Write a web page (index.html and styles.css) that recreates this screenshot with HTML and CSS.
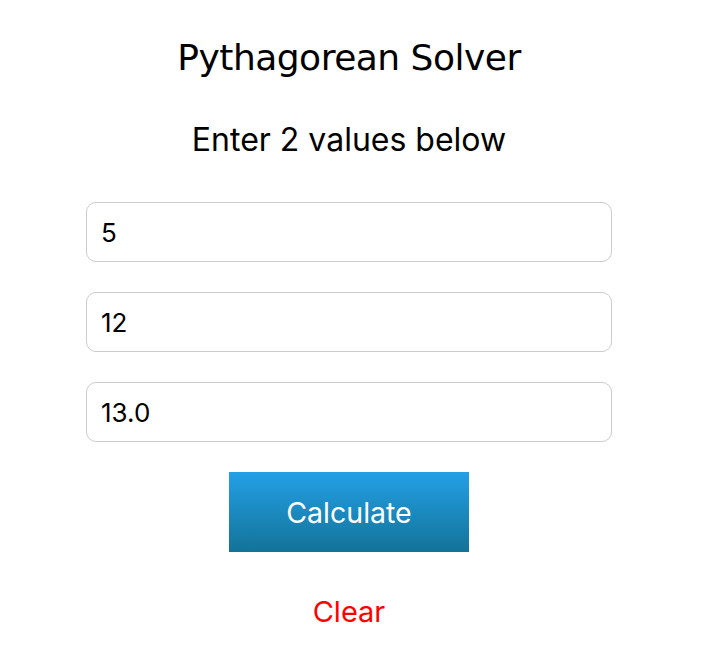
FILE: index.html
```html
<!DOCTYPE html>
<html>
<head>
<meta charset="utf-8">
<link rel="stylesheet" href="styles.css">
</head>
<body>
<main class="app">
  <h1 class="title">Pythagorean Solver</h1>
  <p class="subtitle">Enter 2 values below</p>
  <form class="form">
    <input class="field" type="text" value="5">
    <input class="field" type="text" value="12">
    <input class="field" type="text" value="13.0">
    <button class="calc" type="button">Calculate</button>
    <button class="clear" type="button">Clear</button>
  </form>
</main>
</body>
</html>
```
FILE: styles.css
```css
html, body {
  margin: 0;
  padding: 0;
  background: #fff;
}
.app {
  width: 698px;
  display: flex;
  flex-direction: column;
  align-items: center;
  font-family: "Inter", "Liberation Sans", Arial, sans-serif;
  color: #000;
}
.title {
  margin: 36px 0 0;
  font-family: "DejaVu Sans", sans-serif;
  font-weight: normal;
  font-size: 36px;
  line-height: 44px;
  letter-spacing: -0.5px;
}
.subtitle {
  margin: 42px 0 0;
  font-size: 32px;
  line-height: 36px;
}
.form {
  margin-top: 44px;
  display: flex;
  flex-direction: column;
  align-items: center;
  gap: 30px;
}
.field {
  box-sizing: border-box;
  width: 526px;
  height: 60px;
  border: 1px solid #cccccc;
  border-radius: 10px;
  padding: 0 14px;
  font-family: "Inter", "Liberation Sans", Arial, sans-serif;
  font-size: 26px;
  color: #000;
  outline: none;
}
.calc {
  width: 240px;
  height: 80px;
  border: none;
  background: linear-gradient(#24a0e6, #137398);
  color: #fff;
  font-family: "Inter", "Liberation Sans", Arial, sans-serif;
  font-size: 28.5px;
}
.clear {
  margin-top: 12px;
  border: none;
  background: none;
  color: #ff0000;
  font-family: "Inter", "Liberation Sans", Arial, sans-serif;
  font-size: 29px;
  padding: 0;
  line-height: 36px;
}
```
